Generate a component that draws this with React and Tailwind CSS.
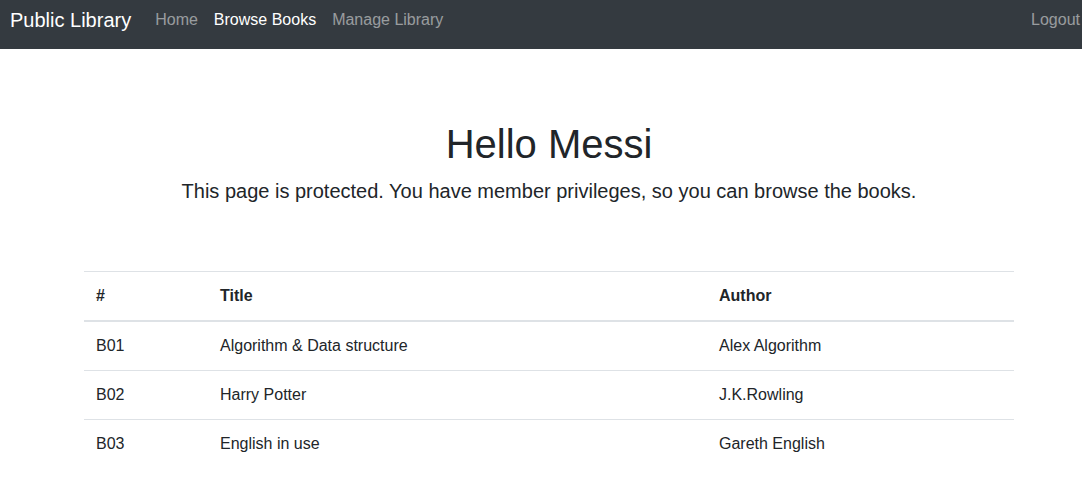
export default function App() {
  const rows = [
    ["B01", "Algorithm & Data structure", "Alex Algorithm"],
    ["B02", "Harry Potter", "J.K.Rowling"],
    ["B03", "English in use", "Gareth English"],
  ];
  return (
    <div className="min-h-[477px] bg-white text-[#212529]" style={{ fontFamily: '"Liberation Sans", Arial, sans-serif' }}>
      <nav className="flex h-[49px] items-center bg-[#343a40] pb-[9px] pl-[10px] pr-[2px]">
        <span className="mr-4 text-[20px] leading-[30px] text-white">Public Library</span>
        <div className="flex text-[16px] leading-6">
          <span className="px-2 text-white/50">Home</span>
          <span className="px-2 text-white">Browse Books</span>
          <span className="px-2 text-white/50">Manage Library</span>
        </div>
        <span className="ml-auto text-[16px] leading-6 text-white/50">Logout</span>
      </nav>
      <div className="ml-[84px] w-[930px]">
        <div className="pt-[71px] text-center">
          <h1 className="mb-2 text-[40px] font-normal leading-[48px]">Hello Messi</h1>
          <p className="text-[20px] leading-[30px]">This page is protected. You have member privileges, so you can browse the books.</p>
        </div>
        <table className="mt-[65px] w-full border-collapse text-left text-[16px] leading-6">
          <thead>
            <tr className="border-t border-b-2 border-[#dee2e6]">
              <th className="w-[124px] p-3 font-bold">#</th>
              <th className="w-[499px] p-3 font-bold">Title</th>
              <th className="p-3 font-bold">Author</th>
            </tr>
          </thead>
          <tbody>
            {rows.map((r, i) => (
              <tr key={r[0]} className={i > 0 ? "border-t border-[#dee2e6]" : ""}>
                <td className="p-3">{r[0]}</td>
                <td className="p-3">{r[1]}</td>
                <td className="p-3">{r[2]}</td>
              </tr>
            ))}
          </tbody>
        </table>
      </div>
    </div>
  );
}
